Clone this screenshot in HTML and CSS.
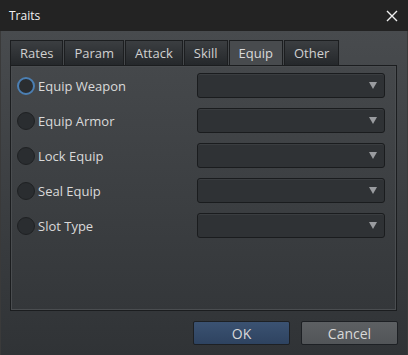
FILE: index.html
```html
<!DOCTYPE html>
<html lang="en">
<head>
  <meta charset="UTF-8">
  <title>Traits</title>
  <link rel="stylesheet" href="styles.css">
</head>
<body>
  <div class="dialog">
    <div class="title-bar">
      <span class="title">Traits</span>
      <svg class="close" width="12" height="12" viewBox="0 0 12 12">
        <path d="M1 1 L11 11 M11 1 L1 11" stroke="#f0f0f0" stroke-width="1.4" fill="none"/>
      </svg>
    </div>
    <div class="dialog-body">
      <div class="tabs">
        <div class="tab">Rates</div>
        <div class="tab">Param</div>
        <div class="tab">Attack</div>
        <div class="tab">Skill</div>
        <div class="tab active">Equip</div>
        <div class="tab">Other</div>
      </div>
      <div class="panel">
        <div class="row">
          <span class="radio focused"></span>
          <span class="label">Equip Weapon</span>
          <div class="select"><span class="arrow"></span></div>
        </div>
        <div class="row">
          <span class="radio"></span>
          <span class="label">Equip Armor</span>
          <div class="select"><span class="arrow"></span></div>
        </div>
        <div class="row">
          <span class="radio"></span>
          <span class="label">Lock Equip</span>
          <div class="select"><span class="arrow"></span></div>
        </div>
        <div class="row">
          <span class="radio"></span>
          <span class="label">Seal Equip</span>
          <div class="select"><span class="arrow"></span></div>
        </div>
        <div class="row">
          <span class="radio"></span>
          <span class="label">Slot Type</span>
          <div class="select"><span class="arrow"></span></div>
        </div>
      </div>
      <div class="buttons">
        <button class="btn ok">OK</button>
        <button class="btn">Cancel</button>
      </div>
    </div>
  </div>
</body>
</html>
```

FILE: styles.css
```css
* {
  box-sizing: border-box;
}
body {
  margin: 0;
  background: #2f3235;
  font-family: 'Open Sans', sans-serif;
  color: #d6d6d6;
}
.dialog {
  width: 408px;
  height: 355px;
  display: flex;
  flex-direction: column;
}
.title-bar {
  height: 31px;
  background: #232323;
  display: flex;
  align-items: center;
  justify-content: space-between;
  padding: 0 10px 0 9px;
}
.title {
  color: #f2f2f2;
  font-size: 12px;
}
.close {
  display: block;
}
.dialog-body {
  flex: 1;
  background: linear-gradient(#484b4e, #303336);
  padding: 9px 10px 0 10px;
  border-left: 1px solid #3a3a3a;
  border-right: 1px solid #3a3a3a;
}
.tabs {
  display: flex;
  height: 25px;
  margin-left: -1px;
}
.tab {
  height: 25px;
  line-height: 24px;
  font-size: 13px;
  padding: 0 9px;
  margin-right: 1px;
  background: linear-gradient(#3b3e41, #25282b);
  border: 1px solid #1c1e20;
  border-bottom: none;
  color: #d0d0d0;
}
.tab.active {
  background: #484b4e;
  color: #dadada;
}
.panel {
  height: 246px;
  border: 1px solid #1b1d1f;
  box-shadow: inset 0 0 0 1px #4a4d50;
  background: linear-gradient(#45484b, #34373a);
  margin-left: -1px;
  padding: 7px 11px 0 6px;
  display: flex;
  flex-direction: column;
  gap: 10px;
}
.row {
  height: 25px;
  display: flex;
  align-items: center;
}
.radio {
  width: 18px;
  height: 18px;
  border-radius: 50%;
  background: #2a2d30;
  border: 1px solid #1f2123;
  margin-right: 3px;
}
.radio.focused {
  border: 2px solid #4b7fb3;
}
.label {
  font-size: 13px;
  flex: 1;
  color: #dadada;
}
.select {
  width: 188px;
  height: 25px;
  border: 1px solid #1a1c1e;
  border-radius: 3px;
  background: #2f3235;
  box-shadow: inset 0 1px 0 #3a3d40;
  display: flex;
  align-items: center;
  justify-content: flex-end;
  padding-right: 7px;
}
.arrow {
  width: 0;
  height: 0;
  border-left: 4px solid transparent;
  border-right: 4px solid transparent;
  border-top: 7px solid #9a9ca0;
}
.buttons {
  display: flex;
  justify-content: flex-end;
  gap: 11px;
  margin-top: 10px;
  margin-right: -1px;
}
.btn {
  width: 97px;
  height: 24px;
  font-family: 'Open Sans', sans-serif;
  font-size: 14px;
  color: #d8d8d8;
  border: 1px solid #1d2024;
  border-radius: 2px;
  background: linear-gradient(#5d6063, #525558);
  padding: 0;
}
.btn.ok {
  background: linear-gradient(#3b5272, #2e4360);
}
```
